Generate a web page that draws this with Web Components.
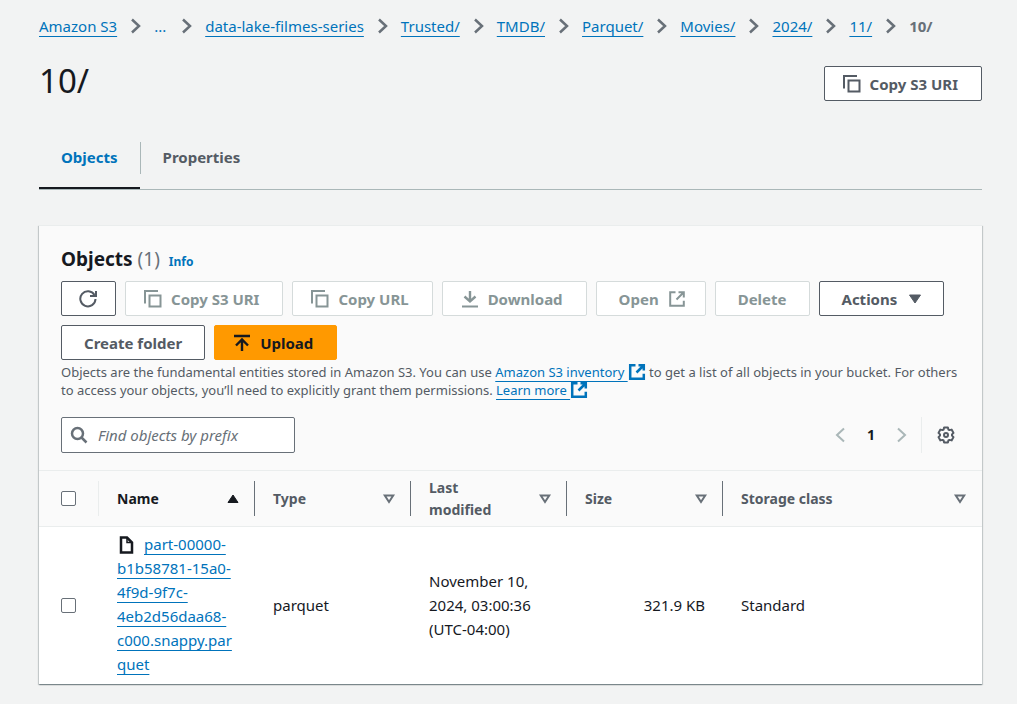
<!DOCTYPE html>
<html lang="en">
<head>
<meta charset="utf-8">
<meta name="viewport" content="width=device-width, initial-scale=1">
<title>10/ - S3 bucket</title>
<style>
  body {
    margin: 0;
    background: #f2f3f3;
    color: #16191f;
    font: 15px/22px "Noto Sans", "Open Sans", sans-serif;
    --link: #0073bb;
    --muted: #687078;
    --control: #545b64;
    --disabled: #879596;
    --divider: #eaeded;
    --gutter: 22px;
  }
</style>
</head>
<body>
<s3-page></s3-page>

<script>
const define = (name, html, setup) => {
  const template = document.createElement('template');
  template.innerHTML = html.trim().replace(/>\s+</g, '><');
  customElements.define(name, class extends HTMLElement {
    constructor() {
      super();
      this.attachShadow({ mode: 'open' }).append(template.content.cloneNode(true));
    }
    connectedCallback() {
      if (setup) setup(this, this.shadowRoot);
    }
  });
};

const ICONS = {
  copy: '<path d="M1 13.500V1h13"/><path d="M5.500 5.500h11v11h-11z"/>',
  refresh: '<path d="M16.500 9a7.600 7.600 0 1 1-1-4"/><path d="M11 6h6V1"/>',
  download: '<path d="M9 1v10M3.500 6.500 9 11.500l5.500-5" stroke-width="2.400"/><path d="M1 16.500h16"/>',
  upload: '<path d="M1 2h16M9 17V6M3 11.500l6-6 6 6" stroke-width="2.400"/>',
  external: '<path d="M10.500 2.200h5.300v5.300M8.500 9.500l7-7M15.800 10.800v5H2.200V2.200H7.500"/>',
  angle: '<path d="M5 2.500l7 6.500-7 6.500"/>',
  'angle-left': '<path d="M13 2.500 6 9l7 6.500"/>',
  caret: '<path d="M3.500 5h11L9 13z" fill="currentColor" stroke-width="1"/>',
  'sort-up': '<path d="M4 12.500h10L9 5z" fill="currentColor" stroke-width="1"/>',
  sort: '<path d="M4.800 5.500h8.400L9 12z"/>',
  search: '<circle cx="7.500" cy="7.500" r="5.500"/><path d="M11.500 11.500l5 5"/>',
  file: '<path d="M4 1.500h6l5 5v10H4z"/><path d="M10 1.500v5h5" stroke-width="1.500"/>',
  settings: '<path stroke-linejoin="round" d="M7.100 1.400 10.900 1.400 11.400 3.500 12.500 4.100 14.600 3.600 16.500 6.900 15 8.400 15 9.600 16.500 11.100 14.600 14.400 12.500 13.900 11.400 14.500 10.900 16.600 7.100 16.600 6.600 14.500 5.500 13.900 3.400 14.400 1.500 11.100 3 9.600 3 8.400 1.500 6.900 3.400 3.600 5.500 4.100 6.600 3.500z"/><circle cx="9" cy="9" r="2"/>'
};

define('s3-icon', `
  <style>
    :host { display: inline-block; width: 18px; height: 18px; flex: none; --stroke: 2; }
    :host([bold]) { --stroke: 2.5; }
    svg { display: block; width: 100%; height: 100%; fill: none; stroke: currentColor; stroke-width: var(--stroke); }
  </style>
  <svg viewBox="0 0 18 18" aria-hidden="true"></svg>
`, (host, root) => {
  root.querySelector('svg').innerHTML = ICONS[host.getAttribute('name')];
});

define('s3-link', `
  <style>
    :host { display: inline; color: var(--link); }
    a {
      color: inherit;
      text-decoration: underline;
      text-decoration-thickness: 1px;
      text-decoration-skip-ink: none;
      text-underline-offset: 4px;
    }
    :host([plain]) a { text-decoration: none; }
    s3-icon { display: none; }
    :host([external]) s3-icon { display: inline-block; vertical-align: -4px; }
  </style>
  <a href="#"><slot></slot></a><s3-icon name="external" bold></s3-icon>
`);

define('s3-button', `
  <style>
    :host { display: block; }
    button {
      display: flex;
      align-items: center;
      justify-content: center;
      gap: 9px;
      box-sizing: border-box;
      height: 35px;
      padding: 0 22px;
      border: 1px solid var(--control);
      border-radius: 2px;
      background: #fff;
      color: var(--control);
      font: bold 15px/20px "Noto Sans", "Open Sans", sans-serif;
      white-space: nowrap;
    }
    :host([icon]) button { padding: 0 23px 0 18px; }
    :host([end-icon]) button { padding: 0 19px 0 22px; }
    :host([icon-only]) button { padding: 0 18px 0 17px; }
    :host([icon-only]) slot { display: none; }
    button:disabled { border-color: #d5dbdb; color: var(--disabled); }
    :host([primary]) button { border-color: #f90; background: #f90; color: #16191f; }
  </style>
  <button type="button"><slot></slot></button>
`, (host, root) => {
  const button = root.querySelector('button');
  button.disabled = host.hasAttribute('disabled');
  if (host.hasAttribute('icon-only')) button.setAttribute('aria-label', host.getAttribute('label'));
  for (const [attr, put] of [['icon', 'prepend'], ['icon-only', 'prepend'], ['end-icon', 'append']]) {
    if (!host.hasAttribute(attr)) continue;
    const icon = document.createElement('s3-icon');
    icon.setAttribute('name', host.getAttribute(attr));
    button[put](icon);
  }
});

define('s3-breadcrumbs', `
  <style>
    :host { display: block; }
    ol { display: flex; flex-wrap: wrap; margin: 0; padding: 0; list-style: none; }
    li { display: flex; align-items: center; }
    li > s3-icon { margin: 0 9px 0 10px; color: var(--muted); }
    s3-link[plain] { padding: 0 2px 0 0; }
    [aria-current] { color: var(--muted); font-weight: bold; }
  </style>
  <nav aria-label="Breadcrumbs"><ol></ol></nav>
`, (host, root) => {
  const crumbs = ['Amazon S3', '...', 'data-lake-filmes-series', 'Trusted/', 'TMDB/', 'Parquet/', 'Movies/', '2024/', '11/'];
  root.querySelector('ol').innerHTML = crumbs.map(text =>
    `<li><s3-link${text === '...' ? ' plain' : ''}>${text}</s3-link><s3-icon name="angle" bold></s3-icon></li>`
  ).join('') + '<li aria-current="page">10/</li>';
});

define('s3-tabs', `
  <style>
    :host { display: block; }
    div { display: flex; border-bottom: 1px solid #aab7b8; }
    button {
      padding: 0 0 13px;
      border: 0;
      border-bottom: 2px solid transparent;
      background: none;
      color: var(--control);
      font: bold 15px/30px "Noto Sans", "Open Sans", sans-serif;
    }
    span { display: block; padding: 0 22px 2px; }
    button + button span { border-left: 1px solid #aab7b8; }
    [aria-selected="true"] { border-color: #16191f; color: var(--link); }
  </style>
  <div role="tablist">
    <button type="button" role="tab" aria-selected="true"><span>Objects</span></button>
    <button type="button" role="tab" aria-selected="false"><span>Properties</span></button>
  </div>
`);

define('s3-panel', `
  <style>
    :host {
      display: block;
      border-top: 1px solid var(--divider);
      background: #fff;
      box-shadow: 0 1px 1px rgba(0, 28, 36, .3), 1px 1px 1px rgba(0, 28, 36, .15), -1px 1px 1px rgba(0, 28, 36, .15);
    }
    header { padding: 19px var(--gutter) 17px; border-bottom: 1px solid var(--divider); background: #fafafa; }
  </style>
  <section><header><slot name="header"></slot></header><slot></slot></section>
`);

define('s3-search', `
  <style>
    :host { display: block; width: 234px; }
    label {
      display: flex;
      align-items: center;
      gap: 10px;
      box-sizing: border-box;
      height: 36px;
      padding: 0 8px;
      border: 1px solid var(--muted);
      border-radius: 2px;
      background: #fff;
      color: var(--muted);
    }
    input {
      flex: 1;
      min-width: 0;
      padding: 0;
      border: 0;
      outline: 0;
      background: none;
      font: 15px/22px "Noto Sans", "Open Sans", sans-serif;
    }
    input::placeholder { color: var(--muted); font-style: italic; }
  </style>
  <label><s3-icon name="search" bold></s3-icon><input type="search" placeholder="Find objects by prefix" aria-label="Find objects by prefix"></label>
`);

define('s3-pagination', `
  <style>
    :host { display: flex; align-items: center; }
    nav { display: flex; align-items: center; }
    button { display: flex; justify-content: center; padding: 0; border: 0; background: none; color: var(--control); }
    button:disabled { color: #aab7b8; }
    .page { width: 44px; color: #16191f; font: bold 14px/22px "Noto Sans", "Open Sans", sans-serif; }
    .settings { margin-left: 10px; padding: 9px 5px 9px 15px; border-left: 1px solid var(--divider); }
  </style>
  <nav aria-label="Pagination">
    <button type="button" disabled aria-label="Previous page"><s3-icon name="angle-left"></s3-icon></button>
    <button type="button" class="page" aria-current="page">1</button>
    <button type="button" disabled aria-label="Next page"><s3-icon name="angle"></s3-icon></button>
  </nav>
  <button type="button" class="settings" aria-label="Preferences"><s3-icon name="settings"></s3-icon></button>
`);

define('s3-objects-header', `
  <style>
    :host { display: block; }
    .title { display: flex; align-items: baseline; gap: 9px; margin-bottom: 8px; }
    h2 { margin: 0; font-size: 19px; line-height: 28px; }
    h2 span { color: var(--muted); font-weight: normal; }
    .title s3-link { font-size: 12px; font-weight: bold; }
    .actions { display: flex; flex-wrap: wrap; gap: 9px; }
    p { margin: 3px 0 18px; color: var(--control); font-size: 13px; line-height: 18px; }
    .tools { display: flex; justify-content: space-between; }
  </style>
  <div class="title"><h2>Objects <span>(1)</span></h2><s3-link plain>Info</s3-link></div>
  <div class="actions">
    <s3-button icon-only="refresh" label="Refresh"></s3-button>
    <s3-button icon="copy" disabled>Copy S3 URI</s3-button>
    <s3-button icon="copy" disabled>Copy URL</s3-button>
    <s3-button icon="download" disabled>Download</s3-button>
    <s3-button end-icon="external" disabled>Open</s3-button>
    <s3-button disabled>Delete</s3-button>
    <s3-button end-icon="caret">Actions</s3-button>
    <s3-button>Create folder</s3-button>
    <s3-button icon="upload" primary>Upload</s3-button>
  </div>
  <p>Objects are the fundamental entities stored in Amazon S3. You can use <s3-link external>Amazon S3 inventory&nbsp;</s3-link> to get a list of all objects in your bucket. For others <wbr>to access your objects, you’ll need to explicitly grant them permissions. <s3-link external>Learn more&nbsp;</s3-link></p>
  <div class="tools"><s3-search></s3-search><s3-pagination></s3-pagination></div>
`);

define('s3-objects-table', `
  <style>
    :host { display: block; }
    table { width: 100%; border-collapse: separate; border-spacing: 0; table-layout: fixed; }
    .select { width: 60px; }
    .data { width: 156px; }
    th, td { padding: 0 18px; text-align: left; }
    th {
      position: relative;
      height: 55px;
      border-bottom: 1px solid var(--divider);
      background: #fafafa;
      color: var(--control);
      font-size: 14px;
      line-height: 22px;
    }
    th:not(:last-child)::after {
      content: "";
      position: absolute;
      top: 10px;
      bottom: 10px;
      right: 0;
      border-right: 1px solid var(--muted);
    }
    th:first-child::after { border-color: var(--divider); }
    th div { display: flex; align-items: center; justify-content: space-between; gap: 18px; margin-right: -5px; }
    th s3-icon { color: var(--muted); }
    [aria-sort], [aria-sort] s3-icon { color: #16191f; }
    th:first-child, td:first-child { padding: 0 0 0 var(--gutter); }
    td { padding-top: 6px; padding-bottom: 7px; line-height: 24px; overflow-wrap: break-word; }
    .name { padding-top: 5px; padding-bottom: 8px; }
    .name s3-icon { margin-right: 9px; vertical-align: -4px; }
    .number { text-align: right; }
    input {
      appearance: none;
      display: block;
      width: 15px;
      height: 15px;
      margin: 0;
      border: 1px solid var(--muted);
      border-radius: 2px;
      background: #fff;
    }
  </style>
  <table>
    <colgroup><col class="select"><col class="data"><col class="data"><col class="data"><col class="data"><col></colgroup>
    <thead>
      <tr>
        <th scope="col"><input type="checkbox" aria-label="Select all objects"></th>
        <th scope="col" aria-sort="ascending"><div>Name<s3-icon name="sort-up"></s3-icon></div></th>
        <th scope="col"><div>Type<s3-icon name="sort"></s3-icon></div></th>
        <th scope="col"><div>Last modified<s3-icon name="sort"></s3-icon></div></th>
        <th scope="col"><div>Size<s3-icon name="sort"></s3-icon></div></th>
        <th scope="col"><div>Storage class<s3-icon name="sort"></s3-icon></div></th>
      </tr>
    </thead>
    <tbody>
      <tr>
        <td><input type="checkbox" aria-label="Select part-00000"></td>
        <td class="name"><s3-icon name="file" bold></s3-icon><s3-link>part-00000-b1b58781-15a0-4f9d-9f7c-4eb2d56daa68-c000.snappy.parquet</s3-link></td>
        <td>parquet</td>
        <td>November 10, 2024, 03:00:36 (UTC-04:00)</td>
        <td class="number">321.9 KB</td>
        <td>Standard</td>
      </tr>
    </tbody>
  </table>
`);

define('s3-page', `
  <style>
    :host { display: block; padding: 15px 35px 20px 39px; }
    .heading { display: flex; align-items: flex-start; justify-content: space-between; margin: 29px 0 41px; }
    h1 { margin: 0; font-size: 33px; line-height: 30px; font-weight: normal; }
    s3-panel { margin-top: 35px; }
  </style>
  <s3-breadcrumbs></s3-breadcrumbs>
  <main>
    <div class="heading"><h1>10/</h1><s3-button icon="copy">Copy S3 URI</s3-button></div>
    <s3-tabs></s3-tabs>
    <s3-panel>
      <s3-objects-header slot="header"></s3-objects-header>
      <s3-objects-table></s3-objects-table>
    </s3-panel>
  </main>
`);
</script>
</body>
</html>
